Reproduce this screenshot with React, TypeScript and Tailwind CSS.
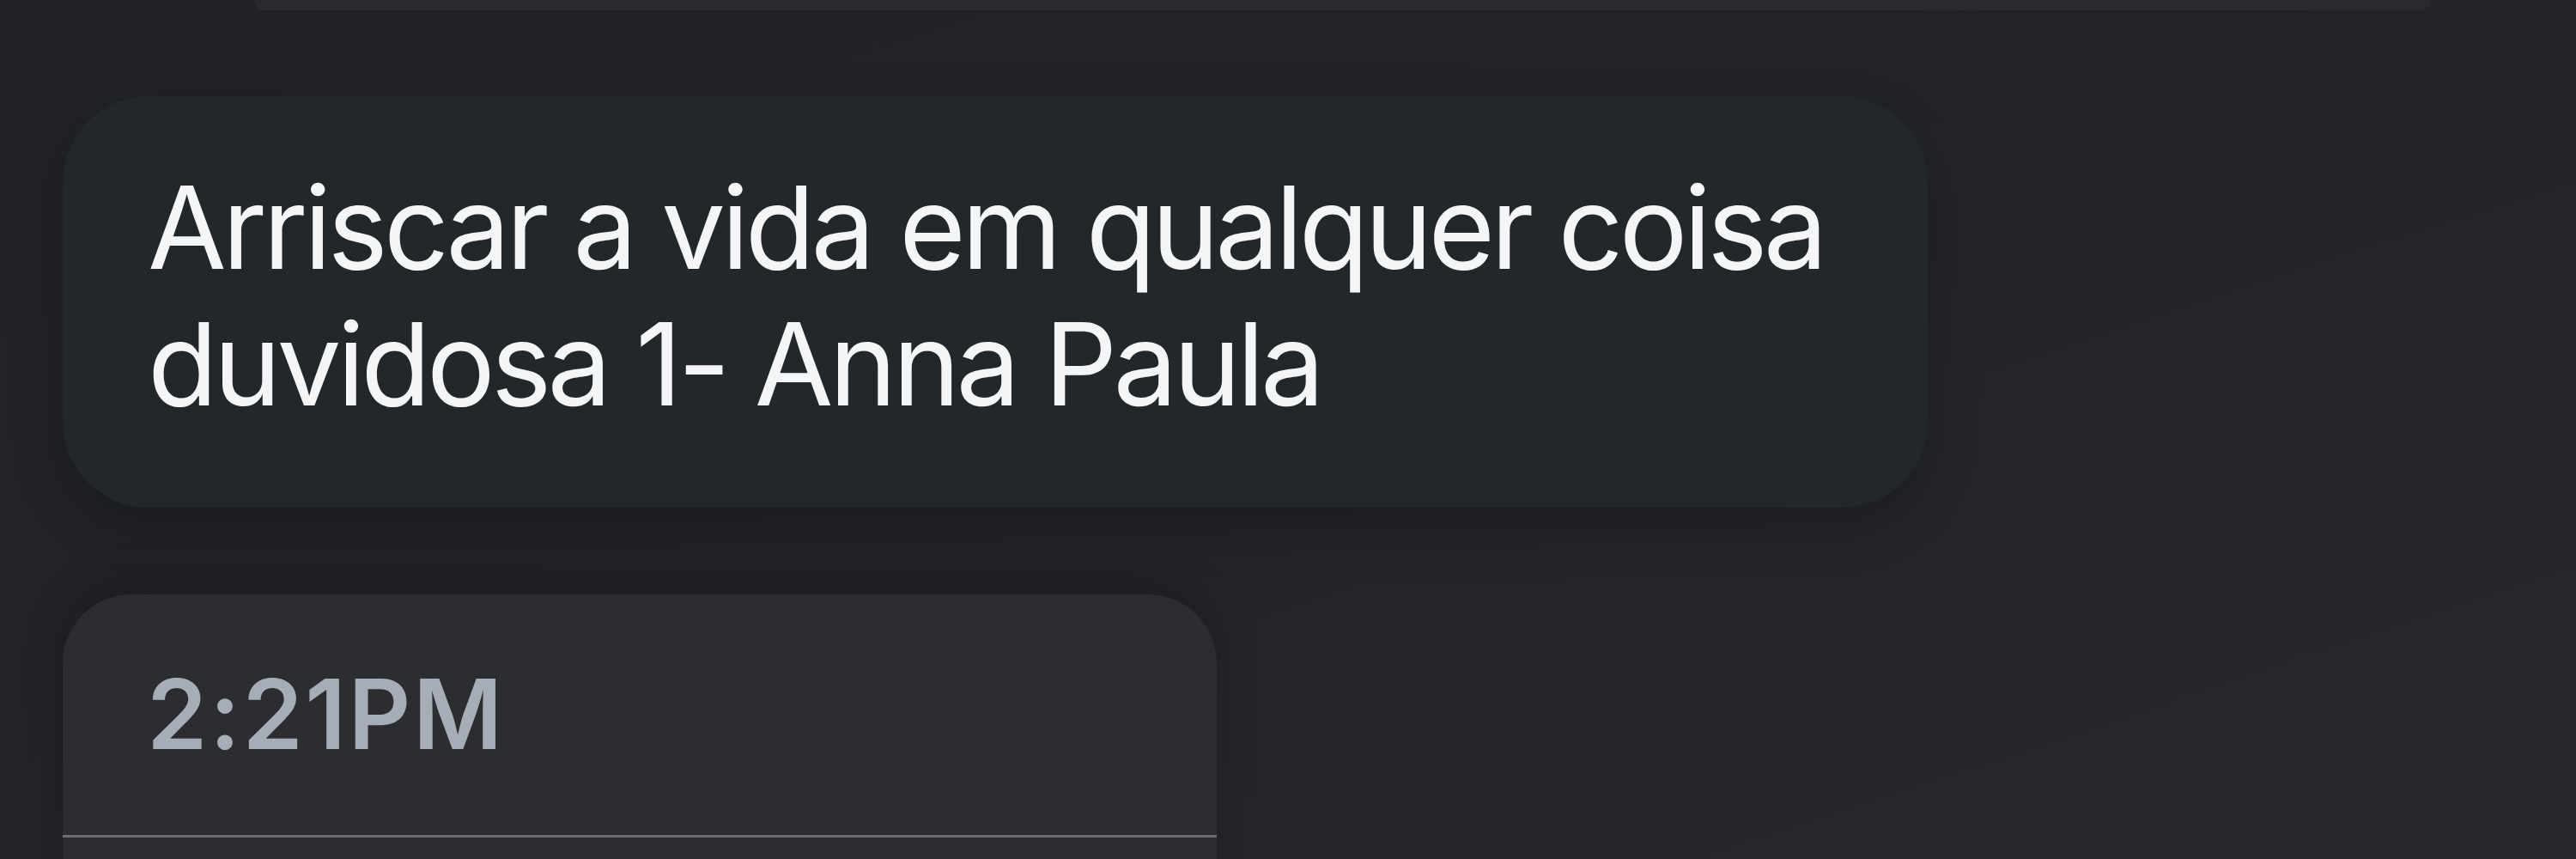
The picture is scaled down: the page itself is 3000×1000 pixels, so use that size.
const font = "font-['Inter','Noto_Sans',sans-serif]"

function MessageBubble({ lines }: { lines: string[] }) {
  return (
    <div className="w-[2172px] h-[479px] rounded-[100px] bg-[#23262b] pl-[99px] pt-[73px] shadow-[0_24px_60px_rgba(0,0,0,0.22)]">
      <p className={`${font} text-[133px] leading-[159px] text-[#f4f5f6] tracking-[-4.7px]`}>
        {lines.map((line) => (
          <span key={line} className="block whitespace-nowrap">
            {line}
          </span>
        ))}
      </p>
    </div>
  )
}

function TimeCard({ time }: { time: string }) {
  return (
    <div className="w-[1344px] h-[400px] rounded-t-[80px] bg-[#2c2d30] shadow-[0_-16px_50px_rgba(0,0,0,0.2)]">
      <div className="h-[283px] pl-[98px] pt-[71px] border-b-[3px] border-[#6c6e72]">
        <span className={`${font} block text-[113px] leading-[136px] font-semibold text-[#a6adb6] tracking-[2.5px]`}>
          {time}
        </span>
      </div>
    </div>
  )
}

export default function App() {
  return (
    <div className="w-[3000px] h-[1000px] overflow-hidden bg-gradient-to-br from-[#202226] via-[#222428] to-[#27292c]">
      <div className="mx-[296px] w-[2535px] h-[12px] rounded-b-[40px] bg-[#282a2e]" />
      <div className="flex flex-col pl-[73px]">
        <div className="mt-[100px]">
          <MessageBubble lines={["Arriscar a vida em qualquer coisa", "duvidosa 1- Anna Paula"]} />
        </div>
        <div className="mt-[101px]">
          <TimeCard time="2:21PM" />
        </div>
      </div>
    </div>
  )
}
